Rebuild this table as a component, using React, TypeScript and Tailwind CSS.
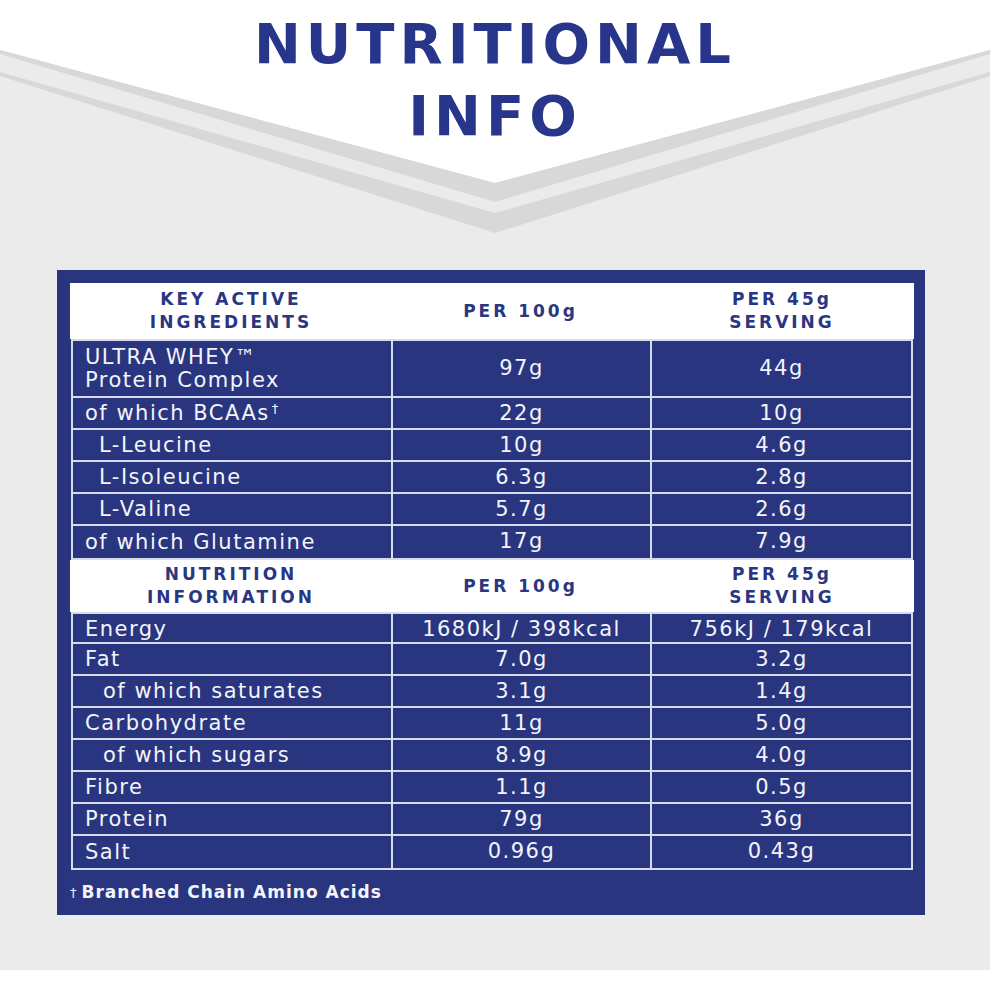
import React from "react";

type Row = {
  label: string;
  sub?: string;
  dagger?: boolean;
  indent?: "sm" | "md";
  a: string;
  b: string;
};

const activeRows: Row[] = [
  { label: "ULTRA WHEY™", sub: "Protein Complex", a: "97g", b: "44g" },
  { label: "of which BCAAs", dagger: true, a: "22g", b: "10g" },
  { label: "L-Leucine", indent: "sm", a: "10g", b: "4.6g" },
  { label: "L-Isoleucine", indent: "sm", a: "6.3g", b: "2.8g" },
  { label: "L-Valine", indent: "sm", a: "5.7g", b: "2.6g" },
  { label: "of which Glutamine", a: "17g", b: "7.9g" },
];

const nutritionRows: Row[] = [
  { label: "Energy", a: "1680kJ / 398kcal", b: "756kJ / 179kcal" },
  { label: "Fat", a: "7.0g", b: "3.2g" },
  { label: "of which saturates", indent: "md", a: "3.1g", b: "1.4g" },
  { label: "Carbohydrate", a: "11g", b: "5.0g" },
  { label: "of which sugars", indent: "md", a: "8.9g", b: "4.0g" },
  { label: "Fibre", a: "1.1g", b: "0.5g" },
  { label: "Protein", a: "79g", b: "36g" },
  { label: "Salt", a: "0.96g", b: "0.43g" },
];

function Backdrop() {
  return (
    <svg className="absolute inset-0" width="990" height="990" viewBox="0 0 990 990">
      <rect x="0" y="50" width="990" height="920" fill="#ebebeb" />
      <polygon points="0,0 990,0 990,50 495,183 0,50" fill="#ffffff" />
      <polygon points="0,50 495,183 990,50 990,54 495,202 0,54" fill="#d8d8d8" />
      <polygon points="0,72 495,213 990,72 990,76 495,233 0,76" fill="#d8d8d8" />
    </svg>
  );
}

function HeaderRow({ first, height }: { first: [string, string]; height: string }) {
  return (
    <div
      className={`grid grid-cols-[321px_259px_1fr] bg-white text-[#2a3681] font-bold text-[17px] leading-[23px] tracking-[3px] text-center ${height}`}
    >
      <div className="flex flex-col items-center justify-center pl-px">
        <span>{first[0]}</span>
        <span>{first[1]}</span>
      </div>
      <div className="flex items-center justify-center">PER 100g</div>
      <div className="flex flex-col items-center justify-center">
        <span>PER 45g</span>
        <span>SERVING</span>
      </div>
    </div>
  );
}

// first row of a group has no divider above it, the rest carry a 2px top border
function DataRow({ row, first }: { row: Row; first: boolean }) {
  const pad = row.indent === "sm" ? "pl-[26px]" : row.indent === "md" ? "pl-[30px]" : "pl-3";
  const h = row.sub ? "h-[57px]" : first ? "h-[30px]" : "h-[32px]";
  return (
    <div className={`grid grid-cols-[320px_259px_1fr] divide-x-2 divide-[#d7dcec] ${h}`}>
      <div className={`flex flex-col justify-center ${pad} leading-[23px]`}>
        <span>
          {row.label}
          {row.dagger && <sup className="text-[13px] ml-0.5 top-[-0.55em]">†</sup>}
        </span>
        {row.sub && <span>{row.sub}</span>}
      </div>
      <div className="flex items-center justify-center whitespace-nowrap">{row.a}</div>
      <div className="flex items-center justify-center whitespace-nowrap">{row.b}</div>
    </div>
  );
}

export default function App() {
  return (
    <div
      className="relative w-[990px] h-[990px] overflow-hidden bg-white"
      style={{ fontFamily: '"DejaVu Sans", "Liberation Sans", sans-serif' }}
    >
      <Backdrop />
      <div className="relative pt-2">
        <h1 className="text-center text-[56px] leading-[72px] font-bold tracking-[5px] text-[#27358a]">
          NUTRITIONAL
          <br />
          INFO
        </h1>

        <div className="ml-[57px] mt-[118px] w-[868px] bg-[#29367f] pt-[13px] pl-[13px] pr-[11px] text-[#f3f4fa] text-[21px] tracking-[1.5px]">
          <HeaderRow first={["KEY ACTIVE", "INGREDIENTS"]} height="h-[56px]" />
          <div className="mx-px border-2 border-[#d7dcec] divide-y-2 divide-[#d7dcec]">
            {activeRows.map((r, i) => (
              <DataRow key={r.label} row={r} first={i === 0} />
            ))}
          </div>
          <HeaderRow first={["NUTRITION", "INFORMATION"]} height="h-[52px]" />
          <div className="mx-px border-2 border-[#d7dcec] divide-y-2 divide-[#d7dcec]">
            {nutritionRows.map((r, i) => (
              <DataRow key={r.label} row={r} first={i === 0} />
            ))}
          </div>
          <div className="h-[45px] flex items-center text-[17px] font-bold tracking-[1px]">
            <span className="text-[13px] font-normal mr-1">†</span>
            Branched Chain Amino Acids
          </div>
        </div>
      </div>
    </div>
  );
}
